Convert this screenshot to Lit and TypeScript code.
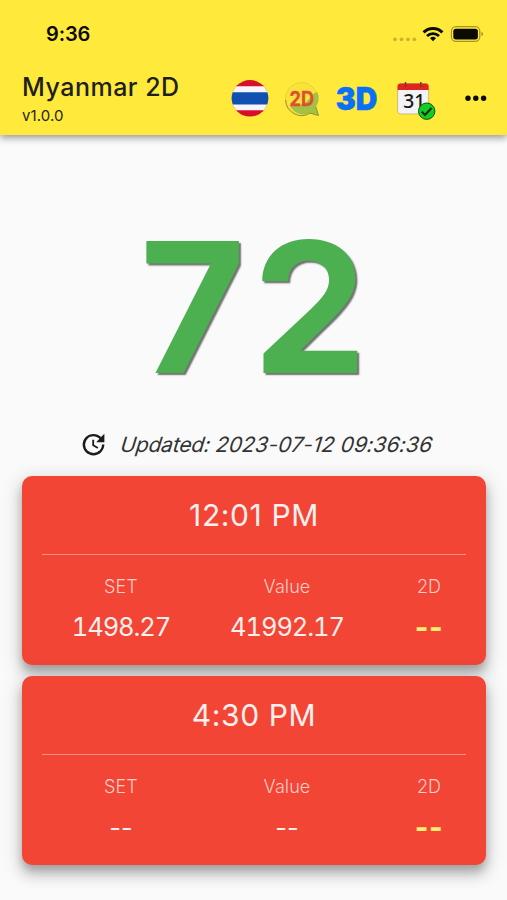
import { LitElement, html, css } from "lit";
import { customElement, property } from "lit/decorators.js";
import { classMap } from "lit/directives/class-map.js";

@customElement("result-card")
class ResultCard extends LitElement {
  @property() time = "";
  @property() set = "--";
  @property() value = "--";
  @property() result = "--";

  static styles = css`
    :host {
      display: block;
      box-sizing: border-box;
      height: 189px;
      border-radius: 10px;
      background: #f34535;
      color: #fff0ee;
      box-shadow: 0 6px 8px -1px rgba(0, 0, 0, 0.2), 0 10px 14px 1px rgba(0, 0, 0, 0.14), 0 4px 20px 4px rgba(0, 0, 0, 0.1);
    }
    .time {
      height: 78px;
      line-height: 79px;
      text-align: center;
      font-size: 30px;
      letter-spacing: 0.6px;
    }
    .rule {
      height: 1px;
      margin: 0 20px;
      background: rgba(255, 255, 255, 0.42);
    }
    .grid {
      display: grid;
      grid-template-columns: 162px 170px 114px;
      padding: 17px 0 0 18px;
      text-align: center;
    }
    .label {
      font-size: 18px;
      line-height: 29px;
      font-weight: 300;
      letter-spacing: 0.1px;
      color: #ffcdc7;
    }
    .num {
      font-size: 25.5px;
      line-height: 37px;
      margin-top: 7px;
      letter-spacing: -1.1px;
      font-variant-numeric: tabular-nums;
    }
    .empty {
      line-height: 39px;
      letter-spacing: 0;
      font-variant-numeric: normal;
    }
    .hit {
      color: #ffee70;
      font-weight: 800;
      font-size: 29px;
      line-height: 39px;
      letter-spacing: 0.6px;
    }
  `;

  private cell(label: string, text: string, hit = false) {
    const classes = { num: true, empty: text === "--", hit };
    return html`<div>
      <div class="label">${label}</div>
      <div class=${classMap(classes)}>${text}</div>
    </div>`;
  }

  render() {
    return html`
      <div class="time">${this.time}</div>
      <div class="rule"></div>
      <div class="grid">
        ${this.cell("SET", this.set)} ${this.cell("Value", this.value)} ${this.cell("2D", this.result, true)}
      </div>
    `;
  }
}

@customElement("app-root")
class AppRoot extends LitElement {
  static styles = css`
    :host {
      display: flex;
      flex-direction: column;
      height: 900px;
      overflow: hidden;
      background: #fafafa;
      color: #1f1f1f;
      font-family: Inter, "Liberation Sans", sans-serif;
    }
    svg {
      display: block;
    }
    .top {
      flex: none;
      height: 134.5px;
      background: #ffea3b;
      box-shadow: 0 3px 7px rgba(0, 0, 0, 0.38);
    }
    .status {
      display: flex;
      align-items: center;
      justify-content: space-between;
      height: 67px;
      padding: 0 23px 0 46px;
    }
    .clock {
      font-size: 20px;
      font-weight: 600;
      letter-spacing: -0.1px;
      color: #0c0b02;
    }
    .bar {
      display: flex;
      align-items: flex-start;
      padding-left: 22px;
    }
    .names {
      width: 208px;
      padding-top: 5px;
    }
    .title {
      font-size: 25px;
      line-height: 30px;
      font-weight: 500;
      letter-spacing: 0.5px;
    }
    .version {
      font-size: 15px;
      line-height: 20px;
      margin-top: 4px;
      letter-spacing: 0.1px;
    }
    .main {
      display: flex;
      flex-direction: column;
      flex: 1;
    }
    .big {
      height: 290px;
      padding-left: 7px;
      line-height: 344px;
      text-align: center;
      font-size: 182px;
      font-weight: 700;
      letter-spacing: 7px;
      color: #4caf50;
      text-shadow: 2px 2px 1.5px rgba(0, 0, 0, 0.55);
    }
    .updated {
      display: flex;
      align-items: center;
      height: 40px;
      padding-left: 78.5px;
      gap: 13px;
    }
    .stamp {
      font-size: 21px;
      font-weight: 400;
      letter-spacing: -0.15px;
      white-space: nowrap;
      color: #333;
      transform: skewX(-17deg);
    }
    .digits {
      letter-spacing: 0.15px;
    }
    .cards {
      display: flex;
      flex-direction: column;
      gap: 11px;
      padding: 11px 21px 27px 22px;
      overflow: hidden;
    }
  `;

  render() {
    return html`
      <header class="top">
        <div class="status">
          <div class="clock">9:36</div>
          <svg width="92" height="22" viewBox="392 22 92 22">
            <g fill="#c9b52f">
              <circle cx="395" cy="38.3" r="1.9" /><circle cx="401.5" cy="38.3" r="1.9" />
              <circle cx="408" cy="38.3" r="1.9" /><circle cx="414.3" cy="38.3" r="1.9" />
            </g>
            <g fill="none" stroke="#0c0b02" stroke-width="3">
              <path d="M423.6 31.4a13.3 13.3 0 0 1 18.8 0" />
              <path d="M427 35a8.6 8.6 0 0 1 12 0" stroke-width="2.8" />
            </g>
            <path d="M433 40.3l-3-3.1a4.3 4.3 0 0 1 6 0z" fill="#0c0b02" />
            <rect x="451.4" y="25.7" width="28.4" height="14.6" rx="4.6" fill="none" stroke="#a3952b" stroke-width="1.2" />
            <rect x="453.3" y="27.7" width="24.6" height="10.7" rx="2.6" fill="#0c0b02" />
            <path d="M481.4 30.8q1.8 1 1.8 2.2t-1.8 2.2z" fill="#a3952b" />
          </svg>
        </div>
        <div class="bar">
          <div class="names">
            <div class="title">Myanmar 2D</div>
            <div class="version">v1.0.0</div>
          </div>
          <svg width="277" height="64" viewBox="230 67 277 64">
            <defs>
              <clipPath id="disc"><circle cx="250" cy="98.3" r="18.3" /></clipPath>
            </defs>
            <g clip-path="url(#disc)">
              <path fill="#d80f2b" d="M230 79h40v39h-40z" />
              <path fill="#f6f6fa" d="M230 86.3h40v24h-40z" />
              <path fill="#0f50b0" d="M230 92.2h40v12.3h-40z" />
            </g>
            <circle cx="301.5" cy="98.5" r="16" fill="#fbe33a" stroke="#dcc23a" stroke-width="0.6" />
            <path d="M290 106q14 0 20-8 3-5 7.400-6a16 16 0 0 1-1.500 15l2.600 8.500-8.500-2.300a16 16 0 0 1-20-7.200z" fill="#a3c145" />
            <path d="M285.600 100a16 16 0 0 0 24.400 13.200l8.500 2.300-2.600-8.500" fill="none" stroke="#8a8a35" stroke-width="0.9" />
            <text x="289.6" y="105.500" font-size="20" font-weight="700" fill="#dc4f33" stroke="#dc4f33" stroke-width="0.3" textLength="24.500" lengthAdjust="spacingAndGlyphs">2D</text>
            <text x="335.8" y="109.5" font-size="31" font-weight="900" fill="#0a70f5" stroke="#0a70f5" stroke-width="0.6" textLength="41.500" lengthAdjust="spacingAndGlyphs">3D</text>
            <rect x="397.6" y="83.5" width="31" height="30.5" rx="3" fill="#f3f2f4" stroke="#b9ab62" stroke-width="0.7" />
            <path d="M397.600 90v-3.500q0-3 3-3h25q3 0 3 3V90z" fill="#e0251f" />
            <path d="M405.500 82v5M420.800 82v5" stroke="#713a35" stroke-width="1.5" />
            <text x="403.3" y="108.300" font-size="20.500" font-family="Noto Sans, sans-serif" fill="#161616" textLength="22" lengthAdjust="spacingAndGlyphs" font-weight="500">31</text>
            <circle cx="426.7" cy="111.2" r="8.2" fill="#10cf22" stroke="#0d5313" stroke-width="1" />
            <path d="M421.700 111.500l3.300 3.500 6.500-7" fill="none" stroke="#0b2b0e" stroke-width="2" />
            <g fill="#0c0b02">
              <circle cx="468" cy="98.3" r="2.7" /><circle cx="475.8" cy="98.3" r="2.7" /><circle cx="483.6" cy="98.3" r="2.7" />
            </g>
          </svg>
        </div>
      </header>
      <main class="main">
        <div class="big">72</div>
        <div class="updated">
          <svg width="29" height="29" viewBox="0 0 24 24">
            <path fill="#1c1c1c" d="M21 10.120h-6.780l2.740-2.820c-2.730-2.700-7.150-2.800-9.880-.1a6.875 6.875 0 0 0 0 9.790 7.020 7.020 0 0 0 9.880 0C18.320 15.650 19 14.080 19 12.100h2c0 1.980-.88 4.550-2.640 6.290-3.510 3.480-9.210 3.480-12.720 0-3.500-3.470-3.530-9.110-.02-12.580a8.987 8.987 0 0 1 12.650 0L21 3v7.120zM12.500 8v4.250l3.500 2.080-.72 1.210L11 13V8h1.500z" />
          </svg>
          <div class="stamp">Updated: <span class="digits">2023-07-12 09:36:36</span></div>
        </div>
        <section class="cards">
          <result-card time="12:01 PM" set="1498.27" value="41992.17"></result-card>
          <result-card time="4:30 PM"></result-card>
        </section>
      </main>
    `;
  }
}
